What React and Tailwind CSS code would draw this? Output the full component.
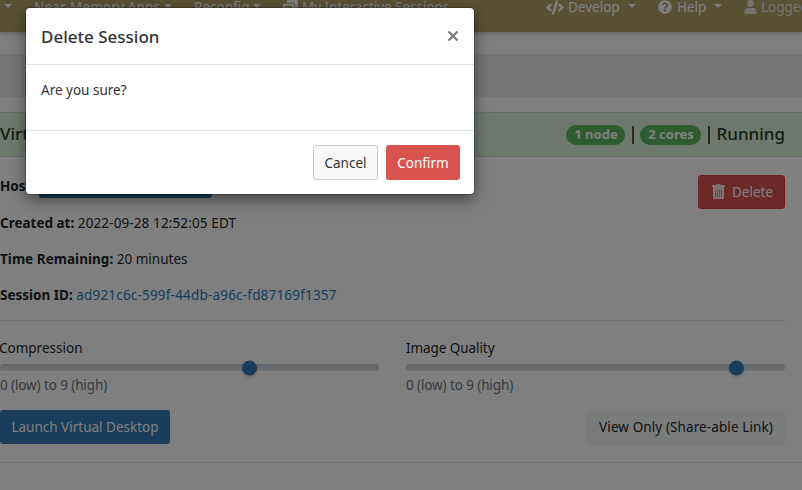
import { FaCode, FaQuestionCircle, FaUser, FaWindowRestore } from "react-icons/fa";

function Caret({ className = "" }) {
  return <span className={`-mt-[3px] h-0 w-0 shrink-0 border-x-[4.5px] border-t-[4.5px] border-x-transparent border-t-white ${className}`} />;
}

function Slider({ label, labelClass = "", thumbClass }) {
  return (
    <div className="flex w-[379px] flex-col">
      <label className={`h-5 self-start whitespace-nowrap leading-5 ${labelClass}`}>{label}</label>
      <div className="mt-[2px] mb-px flex h-[14px] items-center">
        <div className="flex h-[7px] w-full items-center rounded-full bg-[#dee2e6] shadow-[inset_0_4px_4px_rgba(0,0,0,0.1)]">
          <span className={`h-[15px] w-[15px] translate-y-[0.5px] rounded-full bg-[#337ab7] shadow-[0_2px_3px_rgba(0,0,0,0.15)] ${thumbClass}`} />
        </div>
      </div>
      <span className="h-5 self-start whitespace-nowrap leading-[21px] tracking-[-0.11px] text-[#6c757d]">0 (low) to 9 (high)</span>
    </div>
  );
}

function TrashIcon() {
  return (
    <svg className="-mt-px opacity-85" width="13" height="15" viewBox="0 0 13 15" fill="currentColor">
      <path d="M4.5 0h4v1H13v2H0V1h4.5z" />
      <path fillRule="evenodd" d="M1 3h11v11a1 1 0 0 1-1 1H2a1 1 0 0 1-1-1zM3.2 5.5v7.5h.6V5.5zm2 0v7.500h.6V5.5zm2 0v7.500h.6V5.5zm2 0v7.500h.6V5.5z" />
    </svg>
  );
}

export default function App() {
  return (
    <div className="relative h-[490px] w-[802px] overflow-hidden bg-white font-['Noto_Sans','Open_Sans',sans-serif] text-[13.5px] text-[#212529]">
      <nav className="flex h-8 items-start bg-[#b3a369] whitespace-nowrap leading-[14px] text-white shadow-[0_2px_4px_rgba(0,0,0,0.2)]">
        <div className="flex h-[14px] shrink-0 items-center">
          <Caret className="mr-[22px] ml-[4px]" />
          <div className="flex w-[160px] shrink-0 items-center">
            <span className="w-[130px] tracking-[0.15px]">Near-Memory Apps</span>
            <Caret />
          </div>
          <div className="flex w-[89px] shrink-0 items-center">
            <span className="w-[59px]">Reconfig</span>
            <Caret />
          </div>
          <div className="flex w-[263px] shrink-0 items-center">
            <FaWindowRestore className="mr-1 h-[15px] w-[15px] shrink-0" />
            <span className="tracking-[-0.04px]">My Interactive Sessions</span>
          </div>
          <div className="flex w-[112px] shrink-0 items-center">
            <FaCode className="mr-1 h-[15px] w-[18px] shrink-0" />
            <span className="w-[60px]">Develop</span>
            <Caret />
          </div>
          <div className="flex w-[86px] shrink-0 items-center">
            <FaQuestionCircle className="mr-[5px] h-[14px] w-[14px] shrink-0" />
            <span className="w-[37px]">Help</span>
            <Caret />
          </div>
          <div className="flex shrink-0 items-center opacity-75">
            <FaUser className="mr-1 h-[14px] w-[13px] shrink-0" />
            <span>Logged</span>
          </div>
        </div>
      </nav>

      <div className="mt-[22px] h-[43px] bg-[#e9ecef]" />

      <header className="mt-[15px] flex h-[45px] items-center justify-between border-y border-[#c9dfc9] bg-[#def1de] pr-[17px] text-[17px] font-medium text-[#204020]">
        <span className="-mt-[2px]">Virtual Desktop</span>
        <div className="flex items-center whitespace-nowrap">
          <span className="flex h-5 w-[59px] items-center justify-center rounded-full bg-[#5cb85c] text-[13px] font-bold text-white">1 node</span>
          <span className="mr-[6px] ml-[7px] h-[18px] w-[2px] bg-[#5c5436]" />
          <span className="flex h-5 w-[61px] items-center justify-center rounded-full bg-[#5cb85c] text-[13px] font-bold text-white">2 cores</span>
          <span className="mr-[6px] ml-[7px] h-[18px] w-[2px] bg-[#5c5436]" />
          <span className="-mt-[2px]">Running</span>
        </div>
      </header>

      <main className="flex flex-col">
        <div className="flex h-[163px] justify-between pr-[17px]">
          <div className="flex flex-col whitespace-nowrap">
            <div className="mt-[18px] flex h-[39px] items-start">
              <b className="w-[39px] leading-[22px]">Host:</b>
              <span className="mt-[-6px] h-[29px] w-[173px] rounded-[3px] bg-[#337ab7]" />
            </div>
            <p className="h-9 leading-5"><b>Created at:</b> <span className="tracking-[0.12px]">2022-09-28 12:52:05 EDT</span></p>
            <p className="h-9 leading-5"><b className="tracking-[0.04px]">Time Remaining:</b> <span>20 minutes</span></p>
            <p className="h-9 leading-5"><b>Session ID:</b> <span className="tracking-[0.19px] text-[#337ab7]">ad921c6c-599f-44db-a96c-fd87169f1357</span></p>
          </div>
          <button className="mt-[18px] flex h-[34px] w-[87px] items-center rounded-[3px] border border-[#d43f3a] bg-[#d9534f] pl-[13px] text-white">
            <TrashIcon />
            <span className="ml-[7px]">Delete</span>
          </button>
        </div>

        <div className="mr-[17px] flex justify-between border-t border-[#e0e0e0] pt-[17px]">
          <Slider label="Compression" labelClass="-ml-px" thumbClass="ml-[242px]" />
          <Slider label="Image Quality" labelClass="tracking-[-0.07px]" thumbClass="ml-[323px]" />
        </div>

        <div className="mt-[15px] flex h-[53px] items-start justify-between border-b border-[#dfdfdf] pr-[17px] whitespace-nowrap">
          <button className="h-[34px] w-[170px] rounded-[3px] bg-[#337ab7] text-white">Launch Virtual Desktop</button>
          <button className="h-[34px] w-[198px] rounded-[3px] bg-[#f5f8f7] tracking-[0.1px] shadow-[0_1px_1px_rgba(0,0,0,0.08)]">View Only (Share-able Link)</button>
        </div>
      </main>

      <div className="absolute inset-0 bg-black/50" />

      <section className="absolute left-[26px] top-2 flex h-[186px] w-[448px] flex-col rounded-[4px] bg-white shadow-[0_5px_15px_rgba(0,0,0,0.5),0_0_0_1px_rgba(0,0,0,0.2)]">
        <div className="flex h-[57px] items-center justify-between border-b border-[#dee2e6] px-[15px]">
          <h4 className="mt-[2px] text-[17px] font-medium text-[#333]">Delete Session</h4>
          <svg width="12" height="12" viewBox="0 0 12 12" stroke="#7f7f7f" strokeWidth="2.4" fill="none"><path d="M1.5 1.5l9 9M10.5 1.5l-9 9" /></svg>
        </div>
        <div className="h-[65px] px-[15px] pt-[15px] leading-5 text-[#333]">Are you sure?</div>
        <div className="flex flex-1 items-start justify-end gap-2 border-t border-[#dee2e6] pr-[14px] pt-[14px]">
          <button className="h-[35px] w-[65px] rounded-[3px] border border-[#ccc] bg-[#f8f8f8] pt-px text-[#333]">Cancel</button>
          <button className="h-[35px] w-[74px] rounded-[3px] bg-[#d9534f] pt-px text-white">Confirm</button>
        </div>
      </section>
    </div>
  );
}
